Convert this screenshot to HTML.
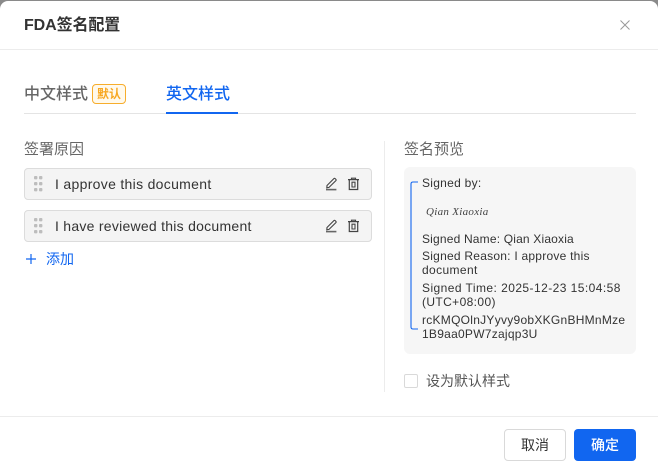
<!DOCTYPE html>
<html lang="zh"><head><meta charset="utf-8"><style>
html,body{margin:0;padding:0;width:658px;height:471px;overflow:hidden;background:#8a8a8a}
body{font-family:"Liberation Sans","Noto Sans CJK SC",sans-serif;color:#333;position:relative}
.d{position:absolute;left:0;top:1px;width:658px;height:470px;background:#fff;border-radius:8px 8px 0 0;overflow:hidden}
.a{position:absolute;white-space:nowrap}
.row{position:absolute;left:24px;width:346px;height:30px;background:#f4f4f4;border:1px solid #dcdcdc;border-radius:4px}
.pv{font-size:12px;line-height:14px;color:#333;left:422px;letter-spacing:.38px}
</style></head><body><div class="d">
<div class="a" style="left:24px;top:14px;font-size:16px;line-height:22px;font-weight:bold;color:#333;letter-spacing:-.1px">FDA签名配置</div>
<svg class="a" style="left:619px;top:18px" width="12" height="12" viewBox="0 0 12 12"><path d="M1.5 1.5L10.5 10.5M10.5 1.5L1.5 10.5" stroke="#999" stroke-width="1" fill="none"/></svg>
<div class="a" style="left:0;top:48px;width:658px;height:1px;background:#ececec"></div>

<div class="a" style="left:24px;top:83px;font-size:16px;line-height:22px;color:#666;font-weight:500">中文样式</div>
<div class="a" style="left:92px;top:83px;width:32px;height:18px;border:1px solid #f7ad2c;background:#fff9ec;border-radius:4px;font-size:12px;line-height:18px;text-align:center;color:#f7a823;font-weight:bold">默认</div>
<div class="a" style="left:166px;top:83px;font-size:16px;line-height:22px;color:#1166f0;font-weight:500">英文样式</div>
<div class="a" style="left:24px;top:112px;width:612px;height:1px;background:#e4e4e4"></div>
<div class="a" style="left:166px;top:111px;width:72px;height:2px;background:#1166f0"></div>

<div class="a" style="left:24px;top:138px;font-size:15px;line-height:22px;color:#666">签署原因</div>
<div class="row" style="top:167px"></div>
<div class="row" style="top:209px"></div>

<svg class="a" style="left:33px;top:174px" width="10" height="17"><g fill="#bdbdbd"><rect x="1" y="1" width="3.4" height="3.4" rx="1"/><rect x="6" y="1" width="3.4" height="3.4" rx="1"/><rect x="1" y="7" width="3.4" height="3.4" rx="1"/><rect x="6" y="7" width="3.4" height="3.4" rx="1"/><rect x="1" y="13" width="3.4" height="3.4" rx="1"/><rect x="6" y="13" width="3.4" height="3.4" rx="1"/></g></svg>
<svg class="a" style="left:33px;top:216px" width="10" height="17"><g fill="#bdbdbd"><rect x="1" y="1" width="3.4" height="3.4" rx="1"/><rect x="6" y="1" width="3.4" height="3.4" rx="1"/><rect x="1" y="7" width="3.4" height="3.4" rx="1"/><rect x="6" y="7" width="3.4" height="3.4" rx="1"/><rect x="1" y="13" width="3.4" height="3.4" rx="1"/><rect x="6" y="13" width="3.4" height="3.4" rx="1"/></g></svg>

<div class="a" style="left:55px;top:173px;font-size:14px;line-height:20px;color:#333;letter-spacing:.31px">I approve this document</div>
<div class="a" style="left:55px;top:215px;font-size:14px;line-height:20px;color:#333;letter-spacing:.26px">I have reviewed this document</div>

<svg class="a" style="left:324px;top:176px" width="14" height="14" viewBox="0 0 14 14" fill="none" stroke="#444"><path d="M3 8.5L2.8 10.8L5 10.4L12 3.5Q12.4 3 12 2.5L11 1.5Q10.5 1 10 1.5Z" stroke-width="1.1"/><path d="M2 12.6H12.4" stroke="#666" stroke-width="1.6"/></svg>
<svg class="a" style="left:346px;top:176px" width="14" height="14" viewBox="0 0 14 14" fill="none" stroke="#444" stroke-width="1.2"><path d="M2 2.6H13M5.5 2.6V1.2H9.5V2.6M3.3 2.6V12.5H11.7V2.6"/><path d="M6 5.2V10H9V5.2Z" stroke-width="1.1"/></svg>
<svg class="a" style="left:324px;top:218px" width="14" height="14" viewBox="0 0 14 14" fill="none" stroke="#444"><path d="M3 8.5L2.8 10.8L5 10.4L12 3.5Q12.4 3 12 2.5L11 1.5Q10.5 1 10 1.5Z" stroke-width="1.1"/><path d="M2 12.6H12.4" stroke="#666" stroke-width="1.6"/></svg>
<svg class="a" style="left:346px;top:218px" width="14" height="14" viewBox="0 0 14 14" fill="none" stroke="#444" stroke-width="1.2"><path d="M2 2.6H13M5.5 2.6V1.2H9.5V2.6M3.3 2.6V12.5H11.7V2.6"/><path d="M6 5.2V10H9V5.2Z" stroke-width="1.1"/></svg>

<svg class="a" style="left:25px;top:252px" width="12" height="12"><path d="M1 6H11M6 1V11" stroke="#1166f0" stroke-width="1.2"/></svg>
<div class="a" style="left:46px;top:247px;font-size:14px;line-height:22px;color:#1166f0">添加</div>

<div class="a" style="left:384px;top:140px;width:1px;height:251px;background:#ececec"></div>
<div class="a" style="left:404px;top:138px;font-size:15px;line-height:22px;color:#666">签名预览</div>
<div class="a" style="left:404px;top:166px;width:232px;height:187px;background:#f6f6f6;border-radius:6px"></div>
<svg class="a" style="left:409px;top:180px" width="12" height="150" fill="none"><path d="M9 1H4Q2 1 2 3V146Q2 148 4 148H9" stroke="#1166f0" stroke-width="1.1"/></svg>

<div class="a pv" style="top:175px;letter-spacing:.28px">Signed by:</div>
<div class="a" style="left:426px;top:204px;font-family:'Liberation Serif',serif;font-style:italic;font-size:11px;line-height:14px;color:#444;letter-spacing:.3px">Qian Xiaoxia</div>
<div class="a pv" style="top:231px;letter-spacing:.18px">Signed Name: Qian Xiaoxia</div>
<div class="a pv" style="top:248px;letter-spacing:.24px">Signed Reason: I approve this</div>
<div class="a pv" style="top:262px">document</div>
<div class="a pv" style="top:280px;letter-spacing:.44px">Signed Time: 2025-12-23 15:04:58</div>
<div class="a pv" style="top:294px">(UTC+08:00)</div>
<div class="a pv" style="top:312px;letter-spacing:.27px">rcKMQOlnJYyvy9obXKGnBHMnMze</div>
<div class="a pv" style="top:326px;letter-spacing:.26px">1B9aa0PW7zajqp3U</div>

<div class="a" style="left:404px;top:373px;width:12px;height:12px;border:1px solid #d9d9d9;border-radius:2px;background:#fff"></div>
<div class="a" style="left:426px;top:370px;font-size:14px;line-height:20px;color:#555">设为默认样式</div>

<div class="a" style="left:0;top:415px;width:658px;height:1px;background:#ececec"></div>
<div class="a" style="left:504px;top:428px;width:60px;height:30px;border:1px solid #d9d9d9;border-radius:4px;background:#fff;font-size:14px;line-height:30px;text-align:center;color:#333">取消</div>
<div class="a" style="left:574px;top:428px;width:62px;height:32px;border-radius:4px;background:#1166f0;font-size:14px;line-height:32px;text-align:center;color:#fff;font-weight:500">确定</div>
</div></body></html>
